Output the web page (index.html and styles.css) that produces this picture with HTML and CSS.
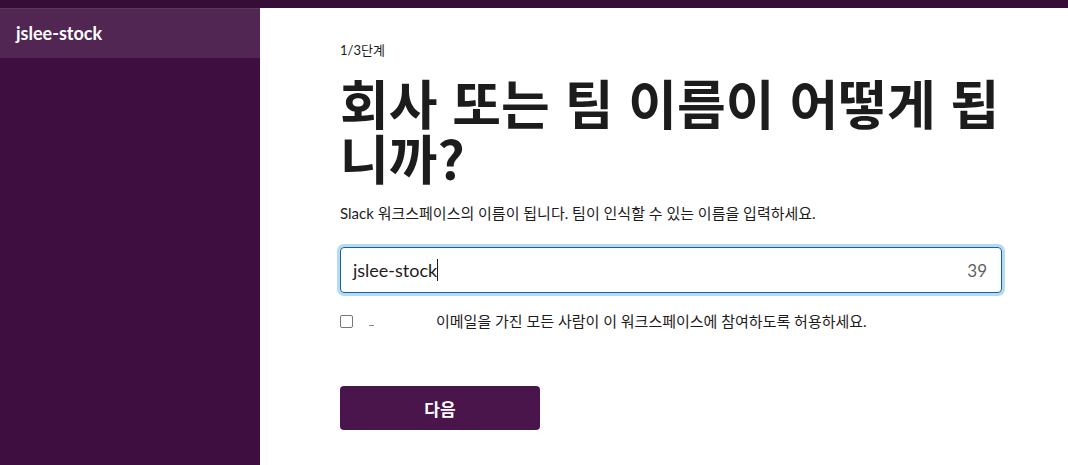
FILE: index.html
```html
<!DOCTYPE html>
<html lang="ko">
<head>
    <meta charset="UTF-8">
    <meta name="viewport" content="width=device-width, initial-scale=1.0">
    <title>Slack - 워크스페이스 만들기</title>
    <link rel="stylesheet" href="styles.css">
</head>
<body>
    <div class="top-bar"></div>
    <div class="layout">
        <!-- 사이드바 -->
        <aside class="sidebar">
            <div class="team-item">jslee-stock</div>
        </aside>

        <!-- 본문 -->
        <main class="main">
            <div class="setup-form">
                <p class="step">1/3단계</p>
                <h1 class="heading">회사 또는 팀 이름이 어떻게 됩니까?</h1>
                <p class="desc">Slack 워크스페이스의 이름이 됩니다. 팀이 인식할 수 있는 이름을 입력하세요.</p>

                <div class="input-wrap">
                    <span class="input-value">jslee-stock</span><span class="caret"></span>
                    <span class="char-count">39</span>
                </div>

                <label class="check-row">
                    <span class="checkbox"></span>
                    <span class="domain-gap"><span class="dash"></span></span>
                    <span class="check-text">이메일을 가진 모든 사람이 이 워크스페이스에 참여하도록 허용하세요.</span>
                </label>

                <button class="next-btn" type="button">다음</button>
            </div>
        </main>
    </div>
</body>
</html>
```

FILE: styles.css
```css
/* 워크스페이스 설정 화면 */
* {
    margin: 0;
    padding: 0;
    box-sizing: border-box;
}

body {
    font-family: Lato, 'Noto Sans CJK KR', sans-serif;
    color: #1d1c1d;
    background: #fff;
    height: 465px;
    overflow: hidden;
    display: flex;
    flex-direction: column;
}

.top-bar {
    height: 8px;
    background: #350d36;
    flex-shrink: 0;
}

.layout {
    flex: 1;
    display: flex;
}

.sidebar {
    width: 260px;
    background: #3f0e40;
    flex-shrink: 0;
}

.team-item {
    height: 50px;
    background: #522653;
    color: #fff;
    font-weight: 700;
    font-size: 18px;
    padding: 13px 0 0 16px;
    border-top: 1px solid #5a3a5b;
}

.main {
    flex: 1;
    padding: 33px 0 0 80px;
}

.setup-form {
    width: 662px;
}

.step {
    font-size: 13px;
    line-height: 18px;
    color: #1d1c1d;
}

.heading {
    font-family: 'Noto Sans CJK KR', sans-serif;
    font-size: 53px;
    font-weight: 700;
    line-height: 55px;
    margin-top: 16px;
    color: #1d1c1d;
}

.desc {
    font-size: 15px;
    line-height: 20px;
    margin-top: 18px;
}

.input-wrap {
    margin-top: 24px;
    height: 46px;
    border: 1px solid #1264a3;
    border-radius: 4px;
    box-shadow: 0 0 0 3px #b6daf0;
    display: flex;
    align-items: center;
    padding: 0 14px 0 12px;
    font-size: 18px;
}

.input-value {
    color: #1d1c1d;
}

.caret {
    width: 1px;
    height: 22px;
    background: #1d1c1d;
}

.char-count {
    margin-left: auto;
    color: #616061;
    font-size: 17px;
}

.check-row {
    display: flex;
    align-items: center;
    margin-top: 18px;
    font-size: 15px;
}

.checkbox {
    width: 13px;
    height: 13px;
    border: 1px solid #767676;
    border-radius: 2px;
    flex-shrink: 0;
}

.domain-gap {
    width: 83px;
    height: 16px;
    position: relative;
}

.dash {
    position: absolute;
    left: 16px;
    top: 12px;
    width: 5px;
    height: 1px;
    background: #888;
}

.check-text {
    line-height: 20px;
}

.next-btn {
    display: block;
    margin-top: 55px;
    width: 200px;
    height: 44px;
    border: none;
    border-radius: 4px;
    background: #4a154b;
    color: #fff;
    font-family: Lato, 'Noto Sans CJK KR', sans-serif;
    font-size: 17px;
    font-weight: 700;
}
```
